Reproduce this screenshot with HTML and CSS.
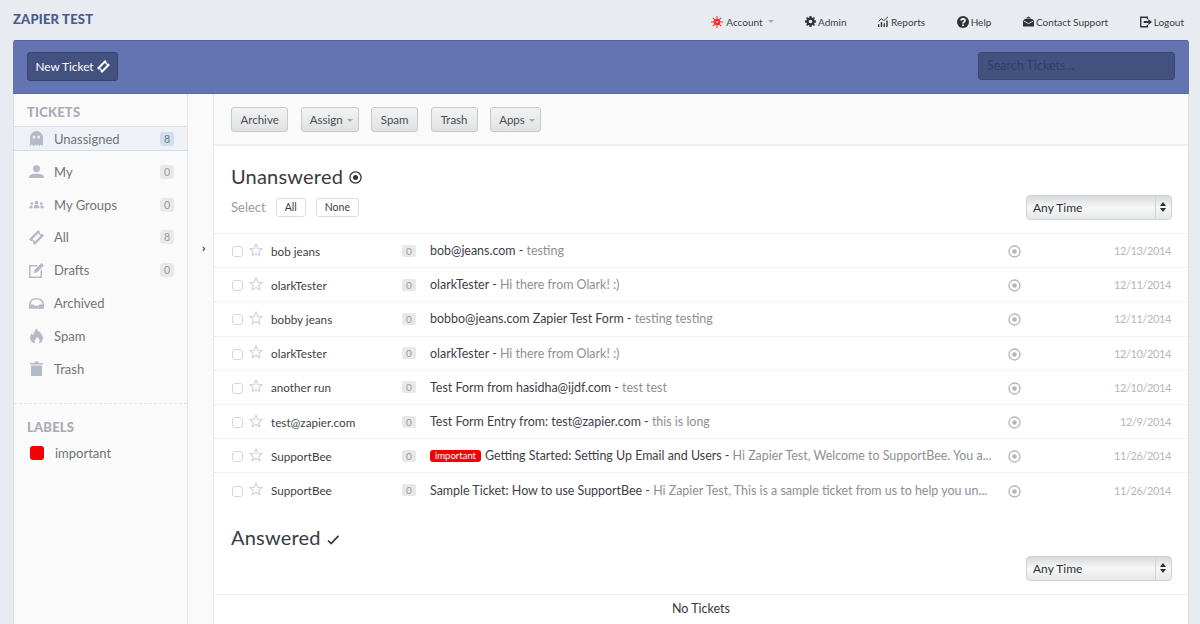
FILE: index.html
```html
<!DOCTYPE html>
<html lang="en">
<head>
  <meta charset="UTF-8" />
  <title>Tickets</title>
  <link rel="stylesheet" href="styles.css">
</head>
<body>

  <header class="topbar">
    <div class="brand">ZAPIER TEST</div>
    <nav class="topnav">
      <a class="account"><svg width="12" height="12" viewBox="0 0 13 13"><g stroke="#f0322c" stroke-width="1.1"><path d="M6.5 0v13M0 6.5h13M2 2l9 9M11 2l-9 9"/></g><circle cx="6.5" cy="6.5" r="3.6" fill="#f0322c"/><circle cx="6.5" cy="6.5" r="1.2" fill="#f9a9a5"/></svg>Account<i class="caret"></i></a>
      <a><svg width="11" height="11" viewBox="0 0 12 12"><path fill="#2f3338" fill-rule="evenodd" d="M5 0h2l.3 1.6 1.1.5 1.4-.9 1 1-.9 1.4.5 1.1L12 5v2l-1.6.3-.5 1.1.9 1.4-1 1-1.4-.9-1.1.5L7 12H5l-.3-1.6-1.1-.5-1.4.9-1-1 .9-1.4-.5-1.1L0 7V5l1.6-.3.5-1.1-.9-1.4 1-1 1.4.9 1.1-.5zM6 4a2 2 0 100 4 2 2 0 000-4z"/></svg>Admin</a>
      <a><svg width="11" height="11" viewBox="0 0 12 12"><path fill="#2f3338" d="M0 9h1.5v3H0zM3 6.5h1.500V12H3zM6 8h1.500v4H6zM9 5h1.500v7H9z"/><path fill="none" stroke="#2f3338" d="M.5 6l3-3 3 2L11 .8"/></svg>Reports</a>
      <a><svg width="12" height="12" viewBox="0 0 13 13"><circle cx="6.5" cy="6.5" r="6.5" fill="#2f3338"/><path fill="none" stroke="#fff" stroke-width="1.7" d="M4.3 5c.2-2.600 4.400-2.500 4.400 0 0 1.500-2.200 1.500-2.200 3"/><circle cx="6.5" cy="10" r="1" fill="#fff"/></svg>Help</a>
      <a><svg width="11" height="11" viewBox="0 0 13 12"><path fill="#2f3338" d="M6.5 0L10 2.400H3zM0 5l1.500-1V3h10v1L13 5v7H0z"/><path fill="none" stroke="#fff" d="M1 5.500l5.500 3 5.500-3"/></svg>Contact Support</a>
      <a><svg width="12" height="12" viewBox="0 0 13 12"><path fill="none" stroke="#2f3338" stroke-width="1.5" d="M8 3V.8H.8v10.400H8V9"/><path fill="#2f3338" d="M4 5h5V2.800L13 6 9 9.200V7H4z"/></svg>Logout</a>
    </nav>
  </header>

  <div class="app">
    <div class="bluebar">
      <button class="new-ticket">New Ticket <svg width="13" height="13" viewBox="0 0 15 15"><path fill="#fff" fill-rule="evenodd" transform="rotate(-45 7.5 7.5)" d="M1 3.500h13v2.700a1.300 1.300 0 000 2.600v2.700H1V8.800a1.300 1.300 0 000-2.600zM3.500 5.800v3.400h8V5.800z"/></svg></button>
      <div class="search">Search Tickets...</div>
    </div>

    <div class="columns">
      <aside class="sidebar">
        <h4 class="side-title">TICKETS</h4>
        <a class="side-item active">
          <svg class="side-icon" viewBox="0 0 14 16"><path fill-rule="evenodd" d="M0 16V7a7 7 0 0114 0v9l-2-1.500L10 16l-1.500-1.500L7 16l-1.500-1.500L4 16l-2-1.500zM3 5v3h2.500V5zm5 0v3h2.500V5z"/></svg>
          <span class="side-label">Unassigned</span><span class="count">8</span>
        </a>
        <a class="side-item">
          <svg class="side-icon" viewBox="0 0 16 14"><circle cx="8" cy="4" r="3.7"/><path d="M0 14c0-4 4-4 5-4.500h6c1 .5 5 .5 5 4.500z"/></svg>
          <span class="side-label">My</span><span class="count">0</span>
        </a>
        <a class="side-item">
          <svg class="side-icon" viewBox="0 0 16 8"><circle cx="8" cy="2" r="2"/><circle cx="3" cy="3" r="1.5"/><circle cx="13" cy="3" r="1.5"/><path d="M5 8c0-3 1-3.500 3-3.500s3 .5 3 3.500zM0 8c0-2 1-3 3-3l1 .5L3.500 8zM16 8c0-2-1-3-3-3l-1 .5.500 2.500z"/></svg>
          <span class="side-label">My Groups</span><span class="count">0</span>
        </a>
        <a class="side-item">
          <svg class="side-icon" viewBox="0 0 15 15"><path fill-rule="evenodd" transform="rotate(-45 7.5 7.5)" d="M1 3.500h13v2.700a1.300 1.300 0 000 2.600v2.700H1V8.800a1.300 1.300 0 000-2.600zM3.500 5.800v3.400h8V5.800z"/></svg>
          <span class="side-label">All</span><span class="count">8</span>
        </a>
        <a class="side-item">
          <svg class="side-icon" viewBox="0 0 15 15"><path fill-rule="evenodd" d="M0 2h9L7.500 3.500h-6v10h10V8L13 6.500V15H0z"/><path d="M12.500 0L15 2.500 8 9.500l-3 .5.500-3z"/></svg>
          <span class="side-label">Drafts</span><span class="count">0</span>
        </a>
        <a class="side-item">
          <svg class="side-icon" viewBox="0 0 16 11"><path fill-rule="evenodd" d="M0 7c0-4 3-7 6-7h4c3 0 6 3 6 7v4H0zM1.500 6.500H5L6 8h4l1-1.500h3.500C14 3.500 12 1.200 10 1.200H6C4 1.200 2 3.500 1.500 6.500z"/></svg>
          <span class="side-label">Archived</span>
        </a>
        <a class="side-item">
          <svg class="side-icon" viewBox="0 0 13 15"><path d="M6 0c1 3 7 5 7 10 0 3-2 5-4 5 1-2 1-4-2-6-1 2-3 3-2 6-2 0-5-2-5-5 0-2 1-4 2-5 0 1 .5 2 1.500 2C3 4 6 3 6 0z"/></svg>
          <span class="side-label">Spam</span>
        </a>
        <a class="side-item">
          <svg class="side-icon" viewBox="0 0 13 15"><path d="M0 2h4.500V.5h4V2H13v1.500H0zM1 4.500h11V15H1z"/></svg>
          <span class="side-label">Trash</span>
        </a>
        <div class="side-divider"></div>
        <h4 class="side-title labels">LABELS</h4>
        <a class="label-item"><span class="swatch"></span>important</a>
      </aside>

      <div class="gutter"><span class="chevron">&rsaquo;</span></div>

      <main class="content">
        <div class="toolbar">
          <button class="tool">Archive</button>
          <button class="tool has-caret">Assign<i class="caret"></i></button>
          <button class="tool">Spam</button>
          <button class="tool">Trash</button>
          <button class="tool has-caret">Apps<i class="caret"></i></button>
        </div>

        <section class="unanswered">
          <h2>Unanswered <svg width="13" height="13" viewBox="0 0 13 13"><circle cx="6.5" cy="6.5" r="5.6" fill="none" stroke="#2f3338" stroke-width="1.3"/><circle cx="6.5" cy="6.5" r="2.5" fill="#2f3338"/></svg></h2>
          <div class="controls">
            <span class="select-text">Select</span>
            <button class="mini">All</button>
            <button class="mini">None</button>
            <div class="time-select">Any Time<span class="arrows"></span></div>
          </div>
        </section>

        <div class="tickets">
          <div class="ticket">
            <span class="check"></span><svg class="star" viewBox="0 0 13 13"><path d="M6.5 1l1.600 3.800 4 .3-3 2.700.9 4-3.500-2.100L3 11.800l.9-4-3-2.700 4-.3z"/></svg>
            <span class="from">bob jeans</span><span class="replies">0</span>
            <span class="subject">bob@jeans.com - <span class="preview">testing</span></span>
            <svg class="state" viewBox="0 0 13 13"><circle cx="6.5" cy="6.5" r="5.5"/><circle class="dot" cx="6.5" cy="6.5" r="2.3"/></svg>
            <span class="date">12/13/2014</span>
          </div>
          <div class="ticket">
            <span class="check"></span><svg class="star" viewBox="0 0 13 13"><path d="M6.5 1l1.600 3.800 4 .3-3 2.700.9 4-3.500-2.100L3 11.800l.9-4-3-2.700 4-.3z"/></svg>
            <span class="from">olarkTester</span><span class="replies">0</span>
            <span class="subject">olarkTester - <span class="preview">Hi there from Olark! :)</span></span>
            <svg class="state" viewBox="0 0 13 13"><circle cx="6.5" cy="6.5" r="5.5"/><circle class="dot" cx="6.5" cy="6.5" r="2.3"/></svg>
            <span class="date">12/11/2014</span>
          </div>
          <div class="ticket">
            <span class="check"></span><svg class="star" viewBox="0 0 13 13"><path d="M6.5 1l1.600 3.800 4 .3-3 2.700.9 4-3.500-2.100L3 11.800l.9-4-3-2.700 4-.3z"/></svg>
            <span class="from">bobby jeans</span><span class="replies">0</span>
            <span class="subject">bobbo@jeans.com Zapier Test Form - <span class="preview">testing testing</span></span>
            <svg class="state" viewBox="0 0 13 13"><circle cx="6.5" cy="6.5" r="5.5"/><circle class="dot" cx="6.5" cy="6.5" r="2.3"/></svg>
            <span class="date">12/11/2014</span>
          </div>
          <div class="ticket">
            <span class="check"></span><svg class="star" viewBox="0 0 13 13"><path d="M6.5 1l1.600 3.800 4 .3-3 2.700.9 4-3.500-2.100L3 11.800l.9-4-3-2.700 4-.3z"/></svg>
            <span class="from">olarkTester</span><span class="replies">0</span>
            <span class="subject">olarkTester - <span class="preview">Hi there from Olark! :)</span></span>
            <svg class="state" viewBox="0 0 13 13"><circle cx="6.5" cy="6.5" r="5.5"/><circle class="dot" cx="6.5" cy="6.5" r="2.3"/></svg>
            <span class="date">12/10/2014</span>
          </div>
          <div class="ticket">
            <span class="check"></span><svg class="star" viewBox="0 0 13 13"><path d="M6.5 1l1.600 3.800 4 .3-3 2.700.9 4-3.500-2.100L3 11.800l.9-4-3-2.700 4-.3z"/></svg>
            <span class="from">another run</span><span class="replies">0</span>
            <span class="subject">Test Form from hasidha@ijdf.com - <span class="preview">test test</span></span>
            <svg class="state" viewBox="0 0 13 13"><circle cx="6.5" cy="6.5" r="5.5"/><circle class="dot" cx="6.5" cy="6.5" r="2.3"/></svg>
            <span class="date">12/10/2014</span>
          </div>
          <div class="ticket">
            <span class="check"></span><svg class="star" viewBox="0 0 13 13"><path d="M6.5 1l1.600 3.800 4 .3-3 2.700.9 4-3.500-2.100L3 11.800l.9-4-3-2.700 4-.3z"/></svg>
            <span class="from">test@zapier.com</span><span class="replies">0</span>
            <span class="subject">Test Form Entry from: test@zapier.com - <span class="preview">this is long</span></span>
            <svg class="state" viewBox="0 0 13 13"><circle cx="6.5" cy="6.5" r="5.5"/><circle class="dot" cx="6.5" cy="6.5" r="2.3"/></svg>
            <span class="date">12/9/2014</span>
          </div>
          <div class="ticket">
            <span class="check"></span><svg class="star" viewBox="0 0 13 13"><path d="M6.5 1l1.600 3.800 4 .3-3 2.700.9 4-3.500-2.100L3 11.800l.9-4-3-2.700 4-.3z"/></svg>
            <span class="from">SupportBee</span><span class="replies">0</span>
            <span class="subject"><span class="tag">important</span>Getting Started: Setting Up Email and Users - <span class="preview">Hi Zapier Test, Welcome to SupportBee. You a...</span></span>
            <svg class="state" viewBox="0 0 13 13"><circle cx="6.5" cy="6.5" r="5.5"/><circle class="dot" cx="6.5" cy="6.5" r="2.3"/></svg>
            <span class="date">11/26/2014</span>
          </div>
          <div class="ticket">
            <span class="check"></span><svg class="star" viewBox="0 0 13 13"><path d="M6.5 1l1.600 3.800 4 .3-3 2.700.9 4-3.500-2.100L3 11.800l.9-4-3-2.700 4-.3z"/></svg>
            <span class="from">SupportBee</span><span class="replies">0</span>
            <span class="subject">Sample Ticket: How to use SupportBee - <span class="preview">Hi Zapier Test, This is a sample ticket from us to help you un...</span></span>
            <svg class="state" viewBox="0 0 13 13"><circle cx="6.5" cy="6.5" r="5.5"/><circle class="dot" cx="6.5" cy="6.5" r="2.3"/></svg>
            <span class="date">11/26/2014</span>
          </div>
        </div>

        <section class="answered">
          <h2>Answered <svg width="12" height="10" viewBox="0 0 13 11"><path fill="none" stroke="#2f3338" stroke-width="1.8" d="M1 6l3.500 3.500L12.500 1"/></svg></h2>
          <div class="controls right">
            <div class="time-select">Any Time<span class="arrows"></span></div>
          </div>
        </section>
        <div class="no-tickets">No Tickets</div>
      </main>
    </div>
  </div>

</body>
</html>
```

FILE: styles.css
```css
/* Reset */
* {
  box-sizing: border-box;
  margin: 0; padding: 0;
  font-family: "Lato", "Open Sans", sans-serif;
}

html, body {
  height: 624px;
  overflow: hidden;
}

body {
  background: #e8ebf0;
  color: #34383e;
  font-size: 13px;
}

/* Top bar */
.topbar {
  height: 40px;
  display: flex;
  justify-content: space-between;
  padding: 0 16px 0 13px;
}

.brand {
  font-size: 13px;
  font-weight: 900;
  color: #47598f;
  line-height: 39px;
  letter-spacing: 0.2px;
}

.topnav {
  display: flex;
  gap: 31.5px;
}

.topnav a {
  display: flex;
  align-items: center;
  height: 43px;
  font-size: 10px;
  color: #3a3e44;
}

.topnav svg {
  margin-right: 2px;
}

.account svg {
  margin-right: 3px;
}

.caret {
  display: inline-block;
  margin-left: 5px;
  border-top: 3px solid #a6a9ad;
  border-left: 3.5px solid transparent;
  border-right: 3.5px solid transparent;
}

/* App shell */
.app {
  margin: 0 11px 0 13px;
  height: 584px;
  background: #fff;
  border-radius: 3px 3px 0 0;
  overflow: hidden;
}

.bluebar {
  height: 54px;
  background: #6374b0;
  border-top: 1px solid #51629f;
  border-bottom: 1px solid #5a6ca8;
  display: flex;
  justify-content: space-between;
  align-items: center;
  padding: 0 14px 1px;
}

.new-ticket {
  height: 29px;
  width: 91px;
  background: #43517f;
  border: 1px solid #36436f;
  border-radius: 3px;
  color: #fff;
  font-size: 11.8px;
}

.new-ticket svg {
  vertical-align: -2px;
}

.search {
  width: 197px;
  height: 28px;
  margin-bottom: 1px;
  background: #43517f;
  border: 1px solid #3a4774;
  border-radius: 3px;
  color: #333e66;
  font-size: 12.5px;
  line-height: 26px;
  padding-left: 8px;
}

.columns {
  display: flex;
  height: 530px;
}

/* Sidebar */
.sidebar {
  width: 175px;
  flex-shrink: 0;
  background: #fafafa;
  border-right: 1px solid #e4e5e7;
  border-left: 1px solid #d9dbdf;
}

.side-title {
  color: #a9acb3;
  font-size: 13px;
  font-weight: 900;
  line-height: 16px;
  padding: 10px 0 0 13px;
  letter-spacing: 0.2px;
  height: 32px;
}

.side-item {
  display: flex;
  align-items: center;
  height: 32.8px;
  padding: 0 13px 0 15px;
  color: #70757c;
}

.side-item.active {
  height: 25px;
  margin-bottom: 4.5px;
  background: #eef2f7;
  border-top: 1px solid #d5e2ef;
  border-bottom: 1px solid #cfdeec;
}

.side-icon {
  width: 15px;
  height: 15px;
  fill: #b4bac6;
  flex-shrink: 0;
}

.side-label {
  flex: 1;
  margin-left: 10px;
}

.count {
  width: 14px;
  height: 14px;
  line-height: 14px;
  background: #e9e9e9;
  border-radius: 3px;
  text-align: center;
  color: #9a9a9a;
  font-size: 10.5px;
}

.side-item.active .count {
  background: #cfdff0;
  color: #6b7b90;
}

.side-divider {
  border-top: 1px dashed #e6e6e6;
  margin-top: 18px;
}

.side-title.labels {
  padding-top: 15px;
  height: 40px;
}

.label-item {
  display: flex;
  align-items: center;
  padding-left: 16px;
  color: #6d7278;
  height: 18px;
}

.swatch {
  width: 14px;
  height: 14px;
  background: #f50000;
  border-radius: 3px;
  margin-right: 11px;
}

/* Gutter */
.gutter {
  width: 26px;
  flex-shrink: 0;
  background: #fafafa;
  border-right: 1px solid #e8e8e8;
  position: relative;
}

.chevron {
  position: absolute;
  left: 14px;
  top: 146px;
  font-size: 12px;
  color: #2f3338;
  font-weight: 700;
}

/* Main */
.content {
  flex: 1;
  min-width: 0;
  background: #fff;
  border-right: 1px solid #d8dbe1;
}

.toolbar {
  height: 52px;
  background: #fafafa;
  border-bottom: 2px solid #eeeeee;
  display: flex;
  align-items: center;
  padding-left: 17px;
  gap: 12.5px;
}

.tool {
  height: 25px;
  min-width: 47px;
  padding: 0 8.5px;
  color: #4a4e54;
  background: linear-gradient(#f3f3f3, #dfe1e3);
  border: 1px solid #c6c9cd;
  border-radius: 3px;
  font-size: 11.5px;
}

.tool.has-caret {
  padding: 0 5px 0 8px;
}

.tool .caret {
  vertical-align: middle;
  margin-left: 4px;
}

.content h2 {
  font-size: 20px;
  font-weight: 400;
  color: #383c42;
  line-height: 26px;
  letter-spacing: 0.2px;
}

.content h2 svg {
  margin-left: 1px;
}

.unanswered {
  height: 87px;
  padding: 17px 16px 0 17px;
}

.controls {
  display: flex;
  align-items: center;
  height: 26px;
  margin-top: 5px;
}

.controls.right {
  justify-content: flex-end;
  margin-top: 5px;
}

.select-text {
  color: #9a9ca0;
  margin-right: 10px;
}

.mini {
  height: 19px;
  padding: 0 8px;
  margin-right: 10px;
  background: #fff;
  border: 1px solid #dedede;
  border-radius: 3px;
  font-size: 10.5px;
  color: #3a3e44;
}

.time-select {
  margin: 1px 0 0 auto;
  width: 146px;
  height: 25px;
  line-height: 23px;
  padding-left: 6px;
  background: linear-gradient(#d9dadc, #f7f7f7 50%, #e6e7e8);
  border: 1px solid #cfd1d3;
  border-radius: 4px;
  font-size: 12px;
  color: #2c3035;
  position: relative;
}

.arrows {
  position: absolute;
  right: 0;
  top: 0;
  width: 16px;
  height: 23px;
  border-left: 1px solid #d0d2d4;
}

.arrows::before,
.arrows::after {
  content: "";
  position: absolute;
  left: 4px;
  border-left: 3px solid transparent;
  border-right: 3px solid transparent;
}

.arrows::before {
  top: 6px;
  border-bottom: 4px solid #2c3035;
}

.arrows::after {
  top: 12px;
  border-top: 4px solid #2c3035;
}

/* Ticket rows */
.tickets {
  border-top: 1px dotted #e6e6e6;
}

.ticket {
  display: flex;
  align-items: center;
  height: 34.2px;
  padding: 0 17px 0 18px;
  border-bottom: 1px dotted #e6e6e6;
  font-size: 12.45px;
}

.ticket:last-child {
  border-bottom: none;
}

.check {
  width: 11px;
  height: 11px;
  border: 1px solid #d6d6d6;
  border-radius: 3px;
  margin-top: 2px;
  flex-shrink: 0;
}

.star {
  width: 14px;
  height: 14px;
  margin-left: 6px;
  flex-shrink: 0;
  margin-top: -2px;
  fill: none;
  stroke: #cfcfcf;
}

.from {
  width: 131px;
  margin-left: 8px;
  font-size: 11.7px;
  color: #3d4147;
  flex-shrink: 0;
}

.replies {
  width: 14px;
  height: 12px;
  line-height: 12px;
  background: #e8e8e8;
  color: #9a9a9a;
  font-size: 10px;
  text-align: center;
  border-radius: 2px;
  flex-shrink: 0;
  margin-right: 14px;
}

.subject {
  width: 564px;
  white-space: nowrap;
  color: #3d4147;
  flex-shrink: 0;
}

.subject .preview {
  color: #8d8f93;
}

.tag {
  background: #f60000;
  color: #fff;
  font-size: 9.5px;
  border-radius: 3px;
  padding: 0 5px;
  margin-right: 4px;
  display: inline-block;
  line-height: 12px;
  vertical-align: 1px;
}

.state {
  width: 13px;
  height: 13px;
  margin-left: 14px;
  flex-shrink: 0;
  margin-top: 2px;
  fill: none;
  stroke: #b5b5b5;
  stroke-width: 1.3;
}

.state .dot {
  fill: #b5b5b5;
  stroke: none;
}

.date {
  flex: 1;
  text-align: right;
  color: #b5b6b9;
  font-size: 11px;
  letter-spacing: -0.4px;
}

/* Answered */
.answered {
  height: 87px;
  padding: 16px 16px 0 17px;
  border-bottom: 1px solid #f0f0f0;
}

.no-tickets {
  text-align: center;
  color: #34383e;
  padding-top: 6px;
  font-size: 12.5px;
}
```
